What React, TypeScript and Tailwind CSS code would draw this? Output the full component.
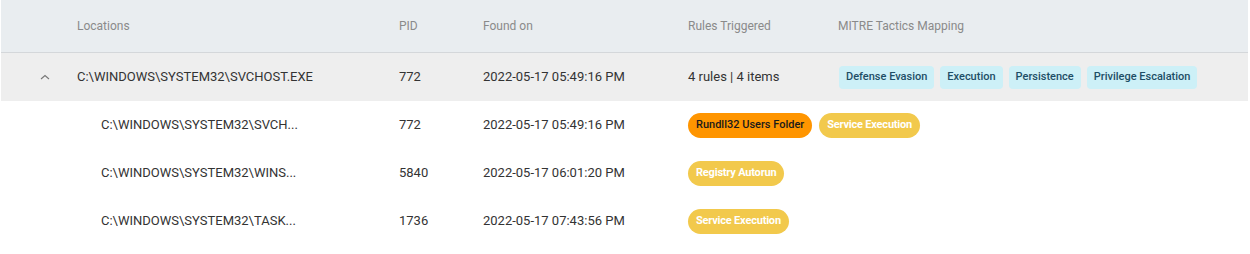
import React from "react";

const cols = "grid grid-cols-[76px_322px_84px_205px_150px_1fr] items-center";

function Chevron() {
  return (
    <svg width="10" height="6" viewBox="0 0 10 6" className="ml-[39px]">
      <polyline points="1,5 5,1.5 9,5" fill="none" stroke="#777" strokeWidth="1.1" />
    </svg>
  );
}

function Rule({ label, kind }: { label: string; kind: "orange" | "yellow" }) {
  return (
    <span
      className={
        kind === "orange"
          ? "inline-flex h-[25px] items-center rounded-full bg-[#ff9500] px-[8px] text-[11px] font-medium text-[#1a1a1a]"
          : "inline-flex h-[25px] items-center rounded-full bg-[#f2c94c] px-[8px] text-[11px] font-bold text-white tracking-[-0.2px]"
      }
    >
      {label}
    </span>
  );
}

function Tactic({ label }: { label: string }) {
  return (
    <span className="inline-flex h-[23px] items-center rounded-[4px] bg-[#cdf0f7] px-[7px] text-[11px] font-medium text-[#1e4e66]">
      {label}
    </span>
  );
}

const children = [
  { loc: "C:\\WINDOWS\\SYSTEM32\\SVCH...", pid: "772", found: "2022-05-17 05:49:16 PM", rules: [["Rundll32 Users Folder", "orange"], ["Service Execution", "yellow"]] },
  { loc: "C:\\WINDOWS\\SYSTEM32\\WINS...", pid: "5840", found: "2022-05-17 06:01:20 PM", rules: [["Registry Autorun", "yellow"]] },
  { loc: "C:\\WINDOWS\\SYSTEM32\\TASK...", pid: "1736", found: "2022-05-17 07:43:56 PM", rules: [["Service Execution", "yellow"]] },
] as const;

export default function App() {
  return (
    <div className="w-[1250px] h-[254px] bg-white pl-[1px] pr-[2px] text-[13px] text-[#333]" style={{ fontFamily: "Roboto, 'Liberation Sans', sans-serif" }}>
      <div className={`${cols} h-[53px] border-b border-[#d4d7da] bg-[#e9edf0] text-[12px] text-[#8a8a8a]`}>
        <div />
        <div>Locations</div>
        <div>PID</div>
        <div>Found on</div>
        <div>Rules Triggered</div>
        <div>MITRE Tactics Mapping</div>
      </div>
      <div className={`${cols} h-[48px] bg-[#eeeeee]`}>
        <div className="flex items-center"><Chevron /></div>
        <div>C:\WINDOWS\SYSTEM32\SVCHOST.EXE</div>
        <div>772</div>
        <div>2022-05-17 05:49:16 PM</div>
        <div>4 rules | 4 items</div>
        <div className="flex gap-[6px] pl-[1px]">
          <Tactic label="Defense Evasion" />
          <Tactic label="Execution" />
          <Tactic label="Persistence" />
          <Tactic label="Privilege Escalation" />
        </div>
      </div>
      {children.map((c, i) => (
        <div key={i} className={`${cols} h-[48px]`}>
          <div />
          <div className="pl-[24px]">{c.loc}</div>
          <div>{c.pid}</div>
          <div>{c.found}</div>
          <div className="col-span-2 flex gap-[7px]">
            {c.rules.map(([l, k]) => (
              <Rule key={l} label={l} kind={k} />
            ))}
          </div>
        </div>
      ))}
    </div>
  );
}
